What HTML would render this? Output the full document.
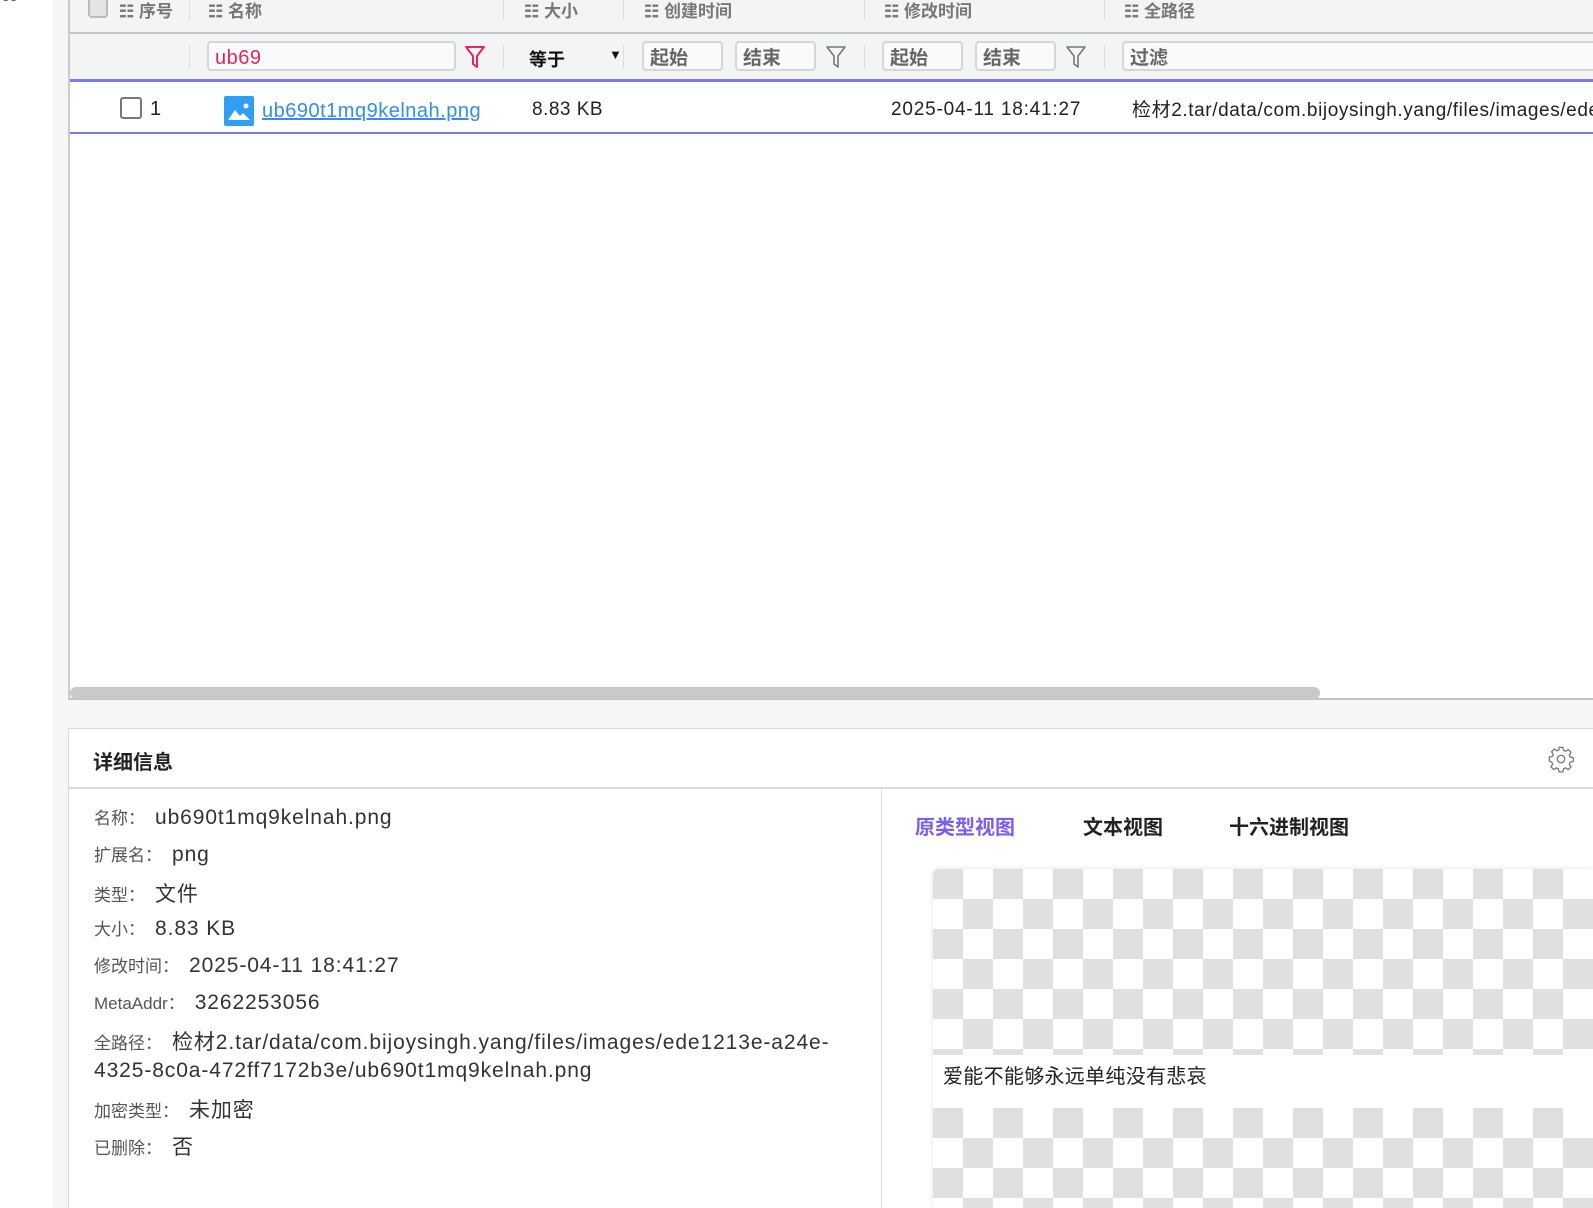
<!DOCTYPE html>
<html><head><meta charset="utf-8"><style>
*{margin:0;padding:0;box-sizing:border-box}
body{width:1593px;height:1208px;overflow:hidden;background:#f6f6f6;font-family:"Liberation Sans","Noto Sans CJK SC",sans-serif;position:relative}
.a{position:absolute;white-space:nowrap}
.hd{color:#777;font-size:17px;font-weight:bold;top:-3px}
.sep{position:absolute;width:1px;background:#dcdfe2}
.in{position:absolute;border:2px solid #d4d6d8;border-radius:4px;background:#fafafa;font-weight:bold;font-size:19px;color:#666;padding-left:6px;line-height:31px}
.row{position:absolute;left:94px;white-space:nowrap;display:flex;align-items:baseline}
.lbl{font-size:17px;color:#555;margin-right:10px}
.val{font-size:21px;color:#333;letter-spacing:0.9px}
.chk{background:repeating-conic-gradient(#e0e0e0 0 25%,#fff 0 50%) 30px 0/60px 60px}
</style></head><body>
<div class="a" style="left:0;top:0;width:53px;height:1208px;background:#fff"></div>
<div class="a" style="left:2px;top:-12px;font-size:14px;color:#555">55</div>
<div class="a" style="left:68px;top:0;width:1525px;height:700px;background:#fff;border-left:2px solid #c9cdd1;border-bottom:2px solid #c0c4c8"></div>
<div class="a" style="left:70px;top:0;width:1523px;height:34px;background:#f3f4f4;border-bottom:2px solid #c0c4c8"></div>
<div class="a" style="left:70px;top:34px;width:1523px;height:46px;background:#f3f4f4"></div>
<div class="a" style="left:88px;top:-4px;width:20px;height:22px;border:2px solid #bbb;border-radius:4px;background:#e4e4e4"></div>
<div class="a hd" style="left:119px">☷ 序号</div>
<div class="a hd" style="left:208px">☷ 名称</div>
<div class="a hd" style="left:524px">☷ 大小</div>
<div class="a hd" style="left:644px">☷ 创建时间</div>
<div class="a hd" style="left:884px">☷ 修改时间</div>
<div class="a hd" style="left:1124px">☷ 全路径</div>
<div class="sep" style="left:189px;top:0;height:20px"></div>
<div class="sep" style="left:503px;top:0;height:20px"></div>
<div class="sep" style="left:623px;top:0;height:20px"></div>
<div class="sep" style="left:864px;top:0;height:20px"></div>
<div class="sep" style="left:1104px;top:0;height:20px"></div>
<div class="sep" style="left:189px;top:45px;height:24px"></div>
<div class="sep" style="left:503px;top:45px;height:24px"></div>
<div class="sep" style="left:623px;top:45px;height:24px"></div>
<div class="sep" style="left:864px;top:45px;height:24px"></div>
<div class="sep" style="left:1104px;top:45px;height:24px"></div>
<div class="in" style="left:207px;top:41px;width:249px;height:30px;color:#e8245c;font-weight:normal;font-size:20px;letter-spacing:0.5px">ub69</div>
<svg class="a" style="left:464px;top:45px" width="22" height="24" viewBox="0 0 22 24"><path d="M2 2H20L13 11V22L9 19V11Z" fill="none" stroke="#e8245c" stroke-width="2" stroke-linejoin="round"/></svg>
<div class="a" style="left:529px;top:46px;font-size:18px;font-weight:bold;color:#111">等于</div>
<div class="a" style="left:609px;top:47px;font-size:13px;color:#111">▼</div>
<div class="in" style="left:642px;top:41px;width:81px;height:30px">起始</div>
<div class="in" style="left:735px;top:41px;width:81px;height:30px">结束</div>
<svg class="a" style="left:825px;top:45px" width="22" height="24" viewBox="0 0 22 24"><path d="M2 2H20L13 11V22L9 19V11Z" fill="none" stroke="#777" stroke-width="1.6" stroke-linejoin="round"/></svg>
<div class="in" style="left:882px;top:41px;width:81px;height:30px">起始</div>
<div class="in" style="left:975px;top:41px;width:81px;height:30px">结束</div>
<svg class="a" style="left:1065px;top:45px" width="22" height="24" viewBox="0 0 22 24"><path d="M2 2H20L13 11V22L9 19V11Z" fill="none" stroke="#777" stroke-width="1.6" stroke-linejoin="round"/></svg>
<div class="in" style="left:1122px;top:41px;width:480px;height:30px">过滤</div>
<div class="a" style="left:70px;top:79px;width:1523px;height:3px;background:#7b78f2"></div>
<div class="a" style="left:70px;top:132px;width:1523px;height:2px;background:#7b78f2"></div>
<div class="a" style="left:120px;top:97px;width:22px;height:22px;border:2px solid #777;border-radius:3px"></div>
<div class="a" style="left:150px;top:98px;font-size:20px;color:#222">1</div>
<svg class="a" style="left:224px;top:96px" width="30" height="30" viewBox="0 0 30 30"><rect width="30" height="30" rx="2" fill="#2f9ff5"/><path d="M4 24L11 14L16 20L19 17L26 24Z" fill="#fff"/><circle cx="22" cy="10" r="2.5" fill="#fff"/></svg>
<div class="a" style="left:262px;top:100px;font-size:20px;color:#2f8ff0;text-decoration:underline;letter-spacing:0.5px">ub690t1mq9kelnah.png</div>
<div class="a" style="left:532px;top:99px;font-size:19px;color:#222;letter-spacing:0.5px">8.83 KB</div>
<div class="a" style="left:891px;top:99px;font-size:19px;color:#222;letter-spacing:0.8px">2025-04-11 18:41:27</div>
<div class="a" style="left:1132px;top:95px;font-size:19px;color:#222;letter-spacing:0.6px">检材2.tar/data/com.bijoysingh.yang/files/images/ede1213e</div>
<div class="a" style="left:70px;top:687px;width:1250px;height:12px;background:#c9c9c9;border-radius:6px"></div>
<div class="a" style="left:68px;top:728px;width:1525px;height:480px;background:#fff;border:1px solid #d8d8d8;border-right:none;border-bottom:none"></div>
<div class="a" style="left:93px;top:746px;font-size:20px;font-weight:bold;color:#222">详细信息</div>
<svg class="a" style="left:1547px;top:745px" width="28" height="28" viewBox="0 0 24 24"><path d="M10.3 2h3.4l.5 2.6 1.8.8 2.2-1.5 2.4 2.4-1.5 2.2.8 1.8 2.6.5v3.4l-2.6.5-.8 1.8 1.5 2.2-2.4 2.4-2.2-1.5-1.8.8-.5 2.6h-3.4l-.5-2.6-1.8-.8-2.2 1.5-2.4-2.4 1.5-2.2-.8-1.8L2 13.7v-3.4l2.6-.5.8-1.8-1.5-2.2 2.4-2.4 2.2 1.5 1.8-.8z" fill="none" stroke="#777" stroke-width="1.1"/><circle cx="12" cy="12" r="3.2" fill="none" stroke="#777" stroke-width="1.1"/></svg>
<div class="a" style="left:69px;top:787px;width:1524px;height:2px;background:#dcdcdc"></div>
<div class="a" style="left:881px;top:789px;width:1px;height:419px;background:#dcdcdc"></div>
<div class="row" style="top:804px"><span class="lbl">名称：</span><span class="val">ub690t1mq9kelnah.png</span></div>
<div class="row" style="top:841px"><span class="lbl">扩展名：</span><span class="val">png</span></div>
<div class="row" style="top:878px"><span class="lbl">类型：</span><span class="val">文件</span></div>
<div class="row" style="top:915px"><span class="lbl">大小：</span><span class="val">8.83 KB</span></div>
<div class="row" style="top:952px"><span class="lbl">修改时间：</span><span class="val">2025-04-11 18:41:27</span></div>
<div class="row" style="top:989px"><span class="lbl">MetaAddr：</span><span class="val">3262253056</span></div>
<div class="row" style="top:1026px"><span class="lbl">全路径：</span><span class="val">检材2.tar/data/com.bijoysingh.yang/files/images/ede1213e-a24e-</span></div>
<div class="row" style="top:1059px"><span class="val">4325-8c0a-472ff7172b3e/ub690t1mq9kelnah.png</span></div>
<div class="row" style="top:1094px"><span class="lbl">加密类型：</span><span class="val">未加密</span></div>
<div class="row" style="top:1131px"><span class="lbl">已删除：</span><span class="val">否</span></div>
<div class="a" style="left:915px;top:811px;font-size:20px;font-weight:bold;color:#7b5cf5">原类型视图</div>
<div class="a" style="left:1083px;top:811px;font-size:20px;font-weight:bold;color:#222">文本视图</div>
<div class="a" style="left:1229px;top:811px;font-size:20px;font-weight:bold;color:#222">十六进制视图</div>
<div class="a" style="left:933px;top:869px;width:660px;height:339px;border-radius:6px 0 0 0;overflow:hidden;box-shadow:0 0 6px rgba(0,0,0,.12)">
<div class="a chk" style="left:0;top:0;width:660px;height:186px"></div>
<div class="a" style="left:0;top:186px;width:660px;height:53px;background:#fff"></div>
<div class="a" style="left:10px;top:191px;font-size:20px;color:#222;letter-spacing:0.3px">爱能不能够永远单纯没有悲哀</div>
<div class="a chk" style="left:0;top:239px;width:660px;height:100px"></div>
</div>
</body></html>
